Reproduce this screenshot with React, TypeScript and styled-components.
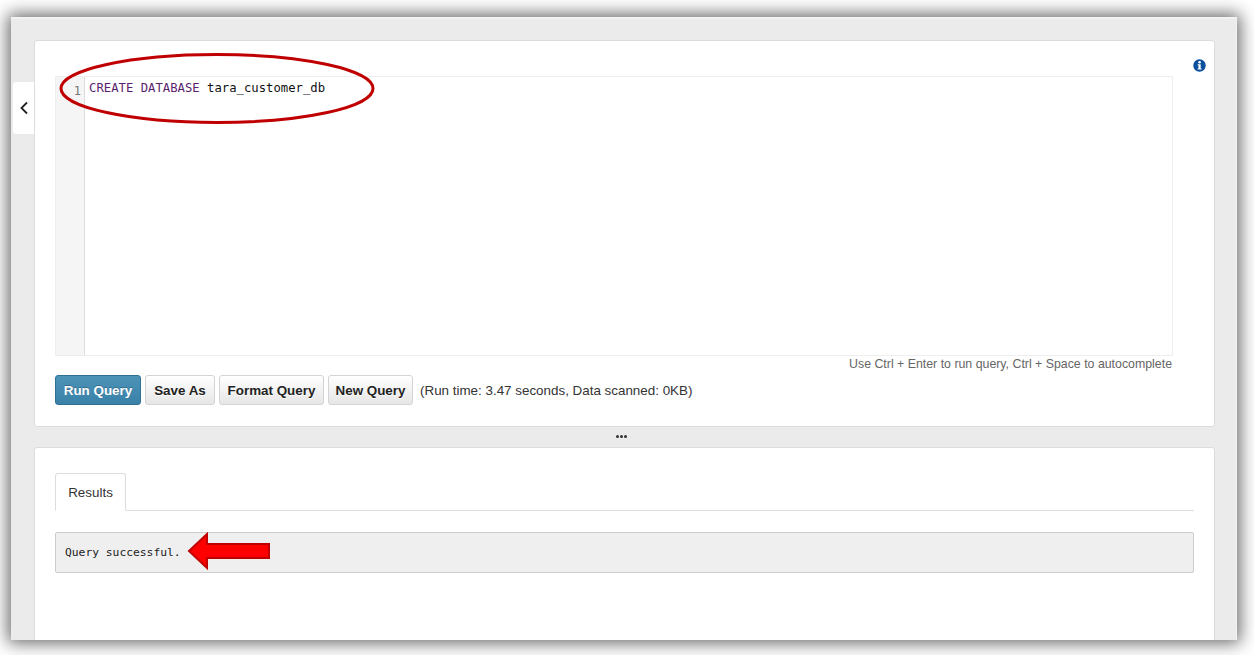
import styled, { createGlobalStyle } from "styled-components";

const GlobalStyle = createGlobalStyle`
    html, body {
        margin: 0;
        height: 100%;
        background: #fff;
        font-family: "Liberation Sans", Arial, sans-serif;
    }
    #root {
        height: 100%;
        padding-top: 17px;
        box-sizing: border-box;
    }
`;

export default function App() {
    return (
        <>
            <GlobalStyle />
            <Frame>
                <CollapseTab>
                    <svg width="10" height="14" viewBox="0 0 10 14">
                        <path d="M8 1.5 2.5 7 8 12.5" fill="none" stroke="#222" strokeWidth="1.8" />
                    </svg>
                </CollapseTab>
                <EditorPanel>
                    <EditorRow>
                        <EditorColumn>
                            <Editor>
                                <Gutter><LineNumber>1</LineNumber></Gutter>
                                <Code>
                                    <Keyword>CREATE DATABASE</Keyword> tara_customer_db
                                </Code>
                            </Editor>
                            <Hint>Use Ctrl + Enter to run query, Ctrl + Space to autocomplete</Hint>
                        </EditorColumn>
                        <InfoIcon width="13" height="13" viewBox="0 0 13 13">
                            <circle cx="6.5" cy="6.5" r="6.2" fill="#0b4f9e" />
                            <circle cx="6.6" cy="3.3" r="1.3" fill="#fff" />
                            <path d="M4.7 5.3h3v4.2h.9v1.1H4.6V9.5h.9V6.4h-.8z" fill="#fff" />
                        </InfoIcon>
                    </EditorRow>
                    <Toolbar>
                        <PrimaryButton $width={86}>Run Query</PrimaryButton>
                        <Button $width={70}>Save As</Button>
                        <Button $width={105}>Format Query</Button>
                        <Button $width={85}>New Query</Button>
                        <Status>(Run time: 3.47 seconds, Data scanned: 0KB)</Status>
                    </Toolbar>
                </EditorPanel>
                <Splitter><Dot /><Dot /><Dot /></Splitter>
                <ResultsPanel>
                    <Tabs><Tab>Results</Tab></Tabs>
                    <ResultBox>Query successful.</ResultBox>
                </ResultsPanel>
                <Ellipse width="318" height="73" viewBox="0 0 318 73">
                    <ellipse cx="159" cy="36.5" rx="156" ry="34" fill="none" stroke="#c00000" strokeWidth="3" />
                </Ellipse>
                <Arrow width="84" height="40" viewBox="0 0 84 40">
                    <path d="M2 19 20 2v10h62v14H20v10z" fill="#ff0000" stroke="#c00000" strokeWidth="2" />
                </Arrow>
            </Frame>
        </>
    );
}

const Frame = styled.div`
    position: relative;
    box-sizing: border-box;
    width: 1226px;
    height: 623px;
    margin-left: 11px;
    padding: 23px 22px 0 23px;
    overflow: hidden;
    background: #ebebeb;
    border-top: 2px solid #f3f3f3;
    border-right: 1px solid #f3f3f3;
    box-shadow: 0 0 16px 3px rgba(0, 0, 0, 0.6);
`;

const Panel = styled.section`
    box-sizing: border-box;
    width: 1181px;
    background: #fff;
    border: 1px solid #dcdcdc;
    border-radius: 3px;
`;

const EditorPanel = styled(Panel)`
    height: 387px;
    padding: 35px 20px 0;
    margin-top: -2px;
`;

const EditorRow = styled.div`
    display: flex;
    align-items: flex-start;
`;

const EditorColumn = styled.div`
    width: 1118px;
    flex: none;
`;

const Editor = styled.div`
    box-sizing: border-box;
    display: flex;
    height: 280px;
    border: 1px solid #eeeeee;
`;

const Gutter = styled.div`
    box-sizing: border-box;
    width: 29px;
    flex: none;
    background: #f5f5f5;
    border-right: 1px solid #dddddd;
    text-align: right;
    padding: 4px 3px 0 0;
`;

const LineNumber = styled.span`
    font: 12px/14px "DejaVu Sans Mono", monospace;
    color: #777;
`;

const Code = styled.div`
    padding: 4px 0 0 4px;
    font: 12.25px/14px "DejaVu Sans Mono", monospace;
    color: #111;
`;

const Keyword = styled.span`
    color: #5a1f6e;
`;

const Hint = styled.div`
    text-align: right;
    font-size: 12.35px;
    line-height: 14px;
    color: #666;
    margin-top: 1px;
    padding-right: 1px;
`;

const InfoIcon = styled.svg`
    flex: none;
    margin: -17px -13px 0 20px;
`;

const Toolbar = styled.div`
    display: flex;
    align-items: center;
    gap: 4px;
    margin-top: 4px;
`;

const Button = styled.button<{ $width: number }>`
    box-sizing: border-box;
    width: ${(p) => p.$width}px;
    height: 30px;
    padding: 0;
    font: bold 13.4px "Liberation Sans", Arial, sans-serif;
    white-space: nowrap;
    color: #222;
    text-shadow: 0 1px 0 #fff;
    background: linear-gradient(#ffffff, #e6e6e6);
    border: 1px solid #d4d4d4;
    border-radius: 3px;
`;

const PrimaryButton = styled(Button)`
    color: #fff;
    text-shadow: 0 -1px 0 rgba(0, 0, 0, 0.25);
    background: linear-gradient(#4d93b8, #3a81a8);
    border-color: #2f6f93;
`;

const Status = styled.span`
    margin-left: 3px;
    font-size: 13.4px;
    color: #333;
`;

const Splitter = styled.div`
    box-sizing: border-box;
    height: 20px;
    padding-bottom: 2px;
    display: flex;
    align-items: center;
    justify-content: center;
    gap: 1px;
    width: 1174px;
`;

const Dot = styled.i`
    width: 3px;
    height: 3px;
    border-radius: 50%;
    background: #333;
`;

const ResultsPanel = styled(Panel)`
    height: 300px;
    padding: 25px 20px 0;
`;

const Tabs = styled.div`
    display: flex;
    height: 37px;
    border-bottom: 1px solid #dddddd;
`;

const Tab = styled.div`
    box-sizing: border-box;
    width: 71px;
    height: 38px;
    padding-top: 11px;
    text-align: center;
    font-size: 13.4px;
    line-height: 16px;
    color: #333;
    background: #fff;
    border: 1px solid #dddddd;
    border-bottom-color: #fff;
    border-radius: 3px 3px 0 0;
`;

const ResultBox = styled.pre`
    box-sizing: border-box;
    height: 41px;
    margin: 21px 0 0;
    padding: 13px 9px 0;
    font: 11.3px/14px "DejaVu Sans Mono", monospace;
    color: #222;
    background: #efefef;
    border: 1px solid #cccccc;
    border-radius: 2px;
`;

const CollapseTab = styled.div`
    position: absolute;
    left: 2px;
    top: 63px;
    box-sizing: border-box;
    width: 21px;
    height: 52px;
    display: flex;
    align-items: center;
    justify-content: center;
    background: #fff;
    border-radius: 3px 0 0 3px;
`;

const Ellipse = styled.svg`
    position: absolute;
    left: 47px;
    top: 33px;
`;

const Arrow = styled.svg`
    position: absolute;
    left: 176px;
    top: 513px;
`;
